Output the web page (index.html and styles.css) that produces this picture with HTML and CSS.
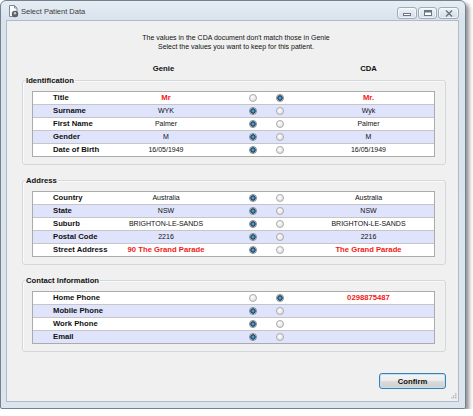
FILE: index.html
```html
<!DOCTYPE html>
<html lang="en">
<head>
  <meta charset="UTF-8">
  <title>Select Patient Data</title>
  <link rel="stylesheet" href="styles.css">
</head>
<body>
  <div class="window">
    <div class="titlebar">
      <svg class="app-icon" width="11" height="13" viewBox="0 0 11 13">
        <path d="M1.5 0.5h5l2.5 2.5v8.5h-7.5z" fill="#fbfcfd" stroke="#7d8a97"/>
        <path d="M6.5 0.5v2.5h2.5" fill="none" stroke="#7d8a97"/>
        <circle cx="7" cy="9" r="3.2" fill="#5b6268"/>
        <circle cx="7" cy="8.2" r="1.2" fill="#c9cfd4"/>
      </svg>
      <span class="caption">Select Patient Data</span>
      <div class="caption-buttons">
        <span class="cbtn min"><svg width="8" height="6" viewBox="0 0 8 6"><rect x="0.5" y="3.5" width="7" height="2" fill="#fff" stroke="#6a7683"/></svg></span>
        <span class="cbtn max"><svg width="8" height="6" viewBox="0 0 8 6"><rect x="0.5" y="0.5" width="7" height="5" fill="#fff" stroke="#6a7683"/><rect x="1" y="1" width="6" height="1.5" fill="#6a7683"/></svg></span>
        <span class="cbtn close"><svg width="8" height="7" viewBox="0 0 8 7"><path d="M1 0.5l6 6M7 0.5l-6 6" stroke="#6a7683" stroke-width="1.5"/></svg></span>
      </div>
    </div>

    <div class="client">
      <p class="intro">The values in the CDA document don't match those in Genie<br>Select the values you want to keep for this patient.</p>

      <div class="cols-head">
        <span></span>
        <span class="col-genie">Genie</span>
        <span></span>
        <span class="col-cda">CDA</span>
      </div>

      <div class="group">
        <div class="group-title">Identification</div>
        <div class="grid">
          <div class="row">
            <span class="field">Title</span>
            <span class="val diff">Mr</span>
            <span class="picks"><input type="radio" name="title"><input type="radio" name="title" checked></span>
            <span class="val diff">Mr.</span>
          </div>
          <div class="row">
            <span class="field">Surname</span>
            <span class="val">WYK</span>
            <span class="picks"><input type="radio" name="surname" checked><input type="radio" name="surname"></span>
            <span class="val">Wyk</span>
          </div>
          <div class="row">
            <span class="field">First Name</span>
            <span class="val">Palmer</span>
            <span class="picks"><input type="radio" name="first" checked><input type="radio" name="first"></span>
            <span class="val">Palmer</span>
          </div>
          <div class="row">
            <span class="field">Gender</span>
            <span class="val">M</span>
            <span class="picks"><input type="radio" name="gender" checked><input type="radio" name="gender"></span>
            <span class="val">M</span>
          </div>
          <div class="row">
            <span class="field">Date of Birth</span>
            <span class="val">16/05/1949</span>
            <span class="picks"><input type="radio" name="dob" checked><input type="radio" name="dob"></span>
            <span class="val">16/05/1949</span>
          </div>
        </div>
      </div>

      <div class="group">
        <div class="group-title">Address</div>
        <div class="grid">
          <div class="row">
            <span class="field">Country</span>
            <span class="val">Australia</span>
            <span class="picks"><input type="radio" name="country" checked><input type="radio" name="country"></span>
            <span class="val">Australia</span>
          </div>
          <div class="row">
            <span class="field">State</span>
            <span class="val">NSW</span>
            <span class="picks"><input type="radio" name="state" checked><input type="radio" name="state"></span>
            <span class="val">NSW</span>
          </div>
          <div class="row">
            <span class="field">Suburb</span>
            <span class="val">BRIGHTON-LE-SANDS</span>
            <span class="picks"><input type="radio" name="suburb" checked><input type="radio" name="suburb"></span>
            <span class="val">BRIGHTON-LE-SANDS</span>
          </div>
          <div class="row">
            <span class="field">Postal Code</span>
            <span class="val">2216</span>
            <span class="picks"><input type="radio" name="postcode" checked><input type="radio" name="postcode"></span>
            <span class="val">2216</span>
          </div>
          <div class="row">
            <span class="field">Street Address</span>
            <span class="val diff">90 The Grand Parade</span>
            <span class="picks"><input type="radio" name="street" checked><input type="radio" name="street"></span>
            <span class="val diff">The Grand Parade</span>
          </div>
        </div>
      </div>

      <div class="group">
        <div class="group-title">Contact Information</div>
        <div class="grid">
          <div class="row">
            <span class="field">Home Phone</span>
            <span class="val"></span>
            <span class="picks"><input type="radio" name="home"><input type="radio" name="home" checked></span>
            <span class="val diff">0298875487</span>
          </div>
          <div class="row">
            <span class="field">Mobile Phone</span>
            <span class="val"></span>
            <span class="picks"><input type="radio" name="mobile" checked><input type="radio" name="mobile"></span>
            <span class="val"></span>
          </div>
          <div class="row">
            <span class="field">Work Phone</span>
            <span class="val"></span>
            <span class="picks"><input type="radio" name="work" checked><input type="radio" name="work"></span>
            <span class="val"></span>
          </div>
          <div class="row">
            <span class="field">Email</span>
            <span class="val"></span>
            <span class="picks"><input type="radio" name="email" checked><input type="radio" name="email"></span>
            <span class="val"></span>
          </div>
        </div>
      </div>

      <div class="footer">
        <button class="confirm">Confirm</button>
      </div>
      <svg class="grip" width="7" height="7" viewBox="0 0 7 7">
        <g fill="#b9bec4">
          <rect x="5" y="1" width="1.5" height="1.5"/>
          <rect x="3" y="3" width="1.5" height="1.5"/>
          <rect x="5" y="3" width="1.5" height="1.5"/>
          <rect x="1" y="5" width="1.5" height="1.5"/>
          <rect x="3" y="5" width="1.5" height="1.5"/>
          <rect x="5" y="5" width="1.5" height="1.5"/>
        </g>
      </svg>
    </div>
  </div>
</body>
</html>
```

FILE: styles.css
```css
body {
  margin: 0;
  background-color: #fff;
  font-family: "Liberation Sans", Arial, sans-serif;
  color: #111;
}
.window {
  width: 466px;
  height: 409px;
  box-sizing: border-box;
  display: flex;
  flex-direction: column;
  border: 1px solid #75818d;
  border-radius: 6px 6px 2px 2px;
  background: linear-gradient(#e6edf4, #d9e3ed 19px, #dce5ee);
  box-shadow: 3px 3px 4px rgba(0, 0, 0, 0.45);
}
.titlebar {
  height: 19px;
  box-sizing: border-box;
  display: flex;
  align-items: flex-start;
  padding: 0 6px 0 7px;
}
.app-icon {
  margin-top: 4px;
}
.caption {
  margin: 5px 0 0 2px;
  font-size: 7.5px;
  line-height: 12px;
  color: #3a3a3a;
}
.caption-buttons {
  display: flex;
  gap: 1px;
  margin: 6px 0 0 auto;
}
.cbtn {
  height: 12px;
  box-sizing: border-box;
  display: flex;
  align-items: center;
  justify-content: center;
  border: 1px solid #9eacba;
  border-radius: 3px;
  background: linear-gradient(#f1f5f9, #dfe7ef 50%, #d4dee8);
  box-shadow: inset 0 0 0 1px rgba(255, 255, 255, 0.6);
}
.cbtn.min { width: 20px; }
.cbtn.max { width: 19px; }
.cbtn.close { width: 21px; }
.client {
  flex: 1;
  display: flex;
  flex-direction: column;
  margin: 0 6px 6px 5px;
  border: 1px solid #aebbc8;
  background-color: #f0f0f0;
}
.intro {
  margin: 0;
  padding: 12px 0 0 7px;
  font-size: 7px;
  line-height: 9px;
  text-align: center;
  color: #111;
}
.cols-head,
.row {
  display: grid;
  grid-template-columns: 91px 84px 95px 1fr;
  align-items: center;
}
.cols-head {
  width: 401px;
  margin: 13px 0 0 26px;
  font-size: 7.7px;
  font-weight: bold;
  line-height: 9px;
  text-align: center;
}
.col-genie {
  margin-left: -5px;
}
.group {
  margin: 7px 12px 0 15px;
  padding: 0 10px 7px 9px;
  border: 1px solid #d3d8dd;
  border-radius: 3px;
  box-shadow: inset 1px 1px 0 #fafafa;
}
.group + .group {
  margin-top: 15px;
}
.group-title {
  width: fit-content;
  margin: -5px 0 0 -7px;
  padding: 0 1px;
  background-color: #f0f0f0;
  font-size: 7.7px;
  font-weight: bold;
  line-height: 9px;
}
.grid {
  margin-top: 6px;
  border: 1px solid #ababab;
}
.row {
  height: 12px;
  background-color: #fff;
  font-size: 7px;
  line-height: 12px;
}
.row + .row {
  border-top: 1px solid #c6c6c6;
}
.row:nth-child(even) {
  background-color: #dfe3fb;
}
.field {
  padding-left: 20px;
  font-size: 7.7px;
  font-weight: bold;
  white-space: nowrap;
}
.val {
  text-align: center;
  white-space: nowrap;
  color: #111;
}
.val.diff {
  color: #f41818;
  font-size: 7.7px;
  font-weight: bold;
}
.picks {
  display: flex;
  gap: 19px;
  padding-left: 41px;
}
.picks input {
  appearance: none;
  width: 8px;
  height: 8px;
  box-sizing: border-box;
  margin: 0;
  border: 1px solid #a9aaab;
  border-radius: 50%;
  background: radial-gradient(circle at 40% 35%, #fff, #d8d8d8);
}
.picks input:checked {
  border-color: #85878a;
  background: radial-gradient(circle, #79c8f0 0, #1f78b8 1.3px, #243a4c 2.4px, #c9c9c9 3px, #e6e6e6);
}
.footer {
  display: flex;
  justify-content: flex-end;
  margin: 21px 12px 0 0;
}
.confirm {
  width: 67px;
  height: 16px;
  padding: 0;
  border: 1px solid #3c7fb1;
  border-radius: 3px;
  background: linear-gradient(#f4f4f4, #ececec 50%, #dcdcdc 51%, #cfcfcf);
  box-shadow: inset 0 0 0 1px #bfe3f6;
  font-family: "Liberation Sans", Arial, sans-serif;
  font-size: 7.7px;
  font-weight: bold;
  color: #111;
}
.grip {
  align-self: flex-end;
  margin: 3px 1px 0 0;
}
```
